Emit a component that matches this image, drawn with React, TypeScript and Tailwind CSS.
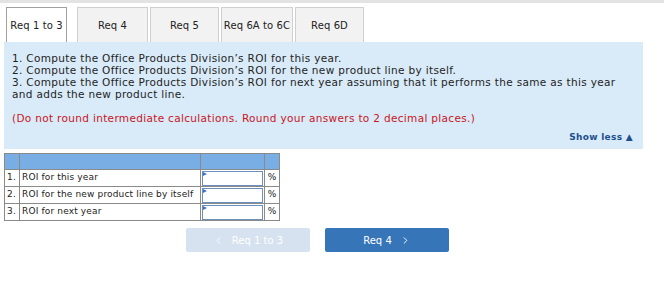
import { useState } from "react";
import clsx from "clsx";
import { ChevronLeft, ChevronRight } from "lucide-react";

// Tabs across the top of the question.
const tabs = [
  { label: "Req 1 to 3", width: "w-[61px]" },
  { label: "Req 4", width: "w-[71px]" },
  { label: "Req 5", width: "w-[69px]" },
  { label: "Req 6A to 6C", width: "w-[72px]" },
  { label: "Req 6D", width: "w-[69px]" },
];

const rows = [
  { n: "1.", label: "ROI for this year" },
  { n: "2.", label: "ROI for the new product line by itself" },
  { n: "3.", label: "ROI for next year" },
];

const InputCell = () => (
  <div className="relative h-[15px] w-full border border-[#6d8fbd] bg-white">
    <span className="absolute left-0 top-0 h-0 w-0 border-y-[2px] border-l-[4px] border-y-transparent border-l-[#3b74c4]" />
  </div>
);

export default function App() {
  const [active] = useState(0);

  return (
    <div className="h-[281px] w-[664px] bg-white font-['DejaVu_Sans',sans-serif] text-[#222]">
      <div className="h-[3px] w-full bg-[#e3e3e3]" />
      <div className="flex items-end px-[6px] pt-[4px]">
        {tabs.map((tab, i) => (
          <div
            key={tab.label}
            className={clsx(
              "flex h-[35px] items-center justify-center whitespace-nowrap border border-b-0 text-[10px] tracking-[0.1px]",
              tab.width,
              i === active
                ? "mr-[10px] border-[#a0a0a0] bg-white"
                : "mr-[2px] border-[#cfcfcf] bg-[#f2f2f2]",
            )}
          >
            {tab.label}
          </div>
        ))}
      </div>

      <div className="mx-[4px] w-[639px] bg-[#d9eaf8] px-[8px] pb-[7px] pt-[10px] text-[10.5px] leading-[12px] tracking-[0.33px] text-[#1f1f1f]">
        <p>1. Compute the Office Products Division’s ROI for this year.</p>
        <p>2. Compute the Office Products Division’s ROI for the new product line by itself.</p>
        <p>
          3. Compute the Office Products Division’s ROI for next year assuming that it performs the same as this year
          and adds the new product line.
        </p>
        <p className="mt-[12px] text-[#c8161d]">
          (Do not round intermediate calculations. Round your answers to 2 decimal places.)
        </p>
        <div className="mt-[8px] flex justify-end pr-[2px] text-[9px] font-bold leading-[10px] tracking-[0.3px] text-[#1d4f8f]">
          Show less ▲
        </div>
      </div>

      <table className="ml-[4px] mt-[4px] border-collapse text-[9px] tracking-[0.15px] text-[#222]">
        <thead>
          <tr className="h-[16px] bg-[#78aee4]">
            <th className="w-[15px] border border-[#8a8a8a]" />
            <th className="w-[181px] border border-[#8a8a8a]" />
            <th className="w-[64px] border border-[#8a8a8a]" />
            <th className="w-[15px] border border-[#8a8a8a]" />
          </tr>
        </thead>
        <tbody>
          {rows.map((row) => (
            <tr key={row.n} className="h-[17px]">
              <td className="border border-[#8a8a8a] pl-[2px]">{row.n}</td>
              <td className="whitespace-nowrap border border-[#8a8a8a] pl-[2px]">{row.label}</td>
              <td className="border border-[#8a8a8a] px-[1px]">
                <InputCell />
              </td>
              <td className="border border-[#8a8a8a] text-center">%</td>
            </tr>
          ))}
        </tbody>
      </table>

      <div className="mt-[7px] flex gap-[15px] pl-[186px]">
        <button
          type="button"
          className="flex h-[24px] w-[124px] items-center justify-center gap-[8px] rounded-[2px] bg-[#d6e2f0] text-[10px] text-white"
        >
          <ChevronLeft size={11} strokeWidth={2} />
          <span>Req 1 to 3</span>
        </button>
        <button
          type="button"
          className="flex h-[24px] w-[124px] items-center justify-center gap-[8px] rounded-[2px] bg-[#3775b9] text-[10px] text-white"
        >
          <span>Req 4</span>
          <ChevronRight size={11} strokeWidth={2} />
        </button>
      </div>
    </div>
  );
}
